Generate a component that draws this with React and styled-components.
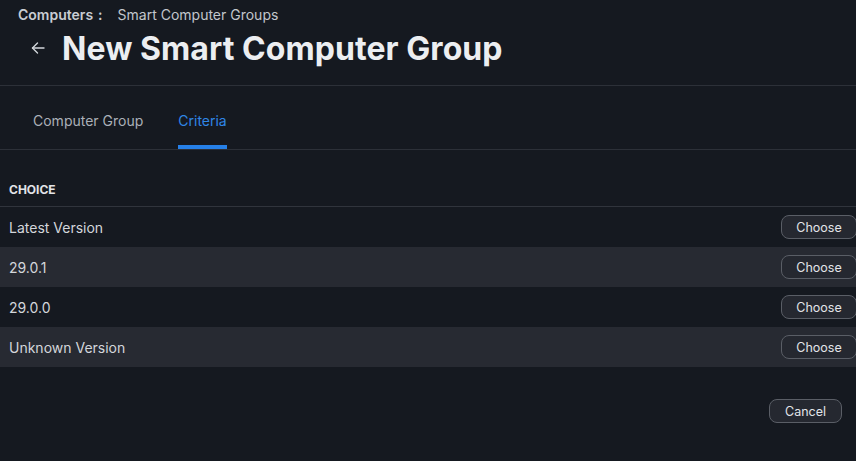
import React from "react";
import styled, { createGlobalStyle } from "styled-components";

const GlobalStyle = createGlobalStyle`
  html, body { margin: 0; padding: 0; background: #151920; }
  body { font-family: Inter, "Noto Sans", sans-serif; color: #d6d9de; }
  * { box-sizing: border-box; }
`;

const Page = styled.div`
  width: 856px;
  height: 461px;
  overflow: hidden;
  background: #151920;
`;

const Header = styled.header`
  padding: 0 18px;
  height: 86px;
  border-bottom: 1px solid #2c3038;
  display: flex;
  flex-direction: column;
`;

const Breadcrumb = styled.div`
  height: 28px;
  display: flex;
  align-items: center;
  font-size: 14px;
  color: #c4c8ce;
`;

const Crumb = styled.span`
  font-weight: ${(p) => (p.$strong ? 600 : 400)};
  color: ${(p) => (p.$strong ? "#c9cdd3" : "#c2c6cc")};
  margin-right: ${(p) => (p.$strong ? "15px" : "0")};
`;

const Sep = styled.span`
  margin-left: 5px;
`;

const TitleRow = styled.div`
  display: flex;
  align-items: center;
  height: 40px;
  padding-left: 11px;
  gap: 15px;
`;

const BackButton = styled.button`
  background: none;
  border: none;
  padding: 0;
  width: 18px;
  height: 18px;
  display: flex;
  align-items: center;
  justify-content: center;
  color: #d2d5da;
  cursor: pointer;
`;

const Title = styled.h1`
  margin: 0;
  font-size: 32px;
  font-weight: 700;
  color: #eceef1;
  letter-spacing: 0.06px;
`;

const Tabs = styled.nav`
  height: 64px;
  display: flex;
  align-items: stretch;
  gap: 35px;
  padding-left: 33px;
  border-bottom: 1px solid #2c3038;
`;

const Tab = styled.div`
  display: flex;
  align-items: center;
  padding-top: 10px;
  font-size: 14px;
  color: ${(p) => (p.$active ? "#2f86e6" : "#abb0b8")};
  border-bottom: 4px solid ${(p) => (p.$active ? "#2680e8" : "transparent")};
`;

const Table = styled.div`
  margin-top: 20px;
  display: flex;
  flex-direction: column;
`;

const HeadRow = styled.div`
  height: 37px;
  display: flex;
  align-items: center;
  padding: 2px 9px 0;
  font-size: 12px;
  font-weight: 700;
  color: #e2e4e8;
  text-transform: uppercase;
  border-bottom: 1px solid #30343c;
`;

const Row = styled.div`
  height: 40px;
  display: flex;
  align-items: center;
  justify-content: space-between;
  padding-left: 9px;
  margin-right: -1px;
  font-size: 14px;
  color: #d3d6db;
  background: ${(p) => (p.$alt ? "#272a32" : "#151920")};
`;

const OutlineButton = styled.button`
  height: 24px;
  width: ${(p) => p.$w || "76px"};
  border-radius: 8px;
  border: 1px solid #5a5e66;
  background: #252830;
  color: #e2e4e8;
  font-family: Inter, "Noto Sans", sans-serif;
  font-size: 12.5px;
  padding: 0;
  cursor: pointer;
`;

const Footer = styled.div`
  display: flex;
  justify-content: flex-end;
  padding: 32px 14px 0 0;
`;

const rows = ["Latest Version", "29.0.1", "29.0.0", "Unknown Version"];

export default function App() {
  return (
    <Page>
      <GlobalStyle />
      <Header>
        <Breadcrumb>
          <Crumb $strong>Computers<Sep>:</Sep></Crumb>
          <Crumb>Smart Computer Groups</Crumb>
        </Breadcrumb>
        <TitleRow>
          <BackButton aria-label="Back">
            <svg width="16" height="16" viewBox="0 0 16 16" fill="none" stroke="currentColor" strokeWidth="1.4" strokeLinecap="round" strokeLinejoin="round">
              <path d="M14 8H2.5" />
              <path d="M7.5 3L2.5 8L7.5 13" />
            </svg>
          </BackButton>
          <Title>New Smart Computer Group</Title>
        </TitleRow>
      </Header>
      <Tabs>
        <Tab>Computer Group</Tab>
        <Tab $active>Criteria</Tab>
      </Tabs>
      <Table>
        <HeadRow>Choice</HeadRow>
        {rows.map((r, i) => (
          <Row key={r} $alt={i % 2 === 1}>
            <span>{r}</span>
            <OutlineButton>Choose</OutlineButton>
          </Row>
        ))}
      </Table>
      <Footer>
        <OutlineButton $w="73px">Cancel</OutlineButton>
      </Footer>
    </Page>
  );
}
